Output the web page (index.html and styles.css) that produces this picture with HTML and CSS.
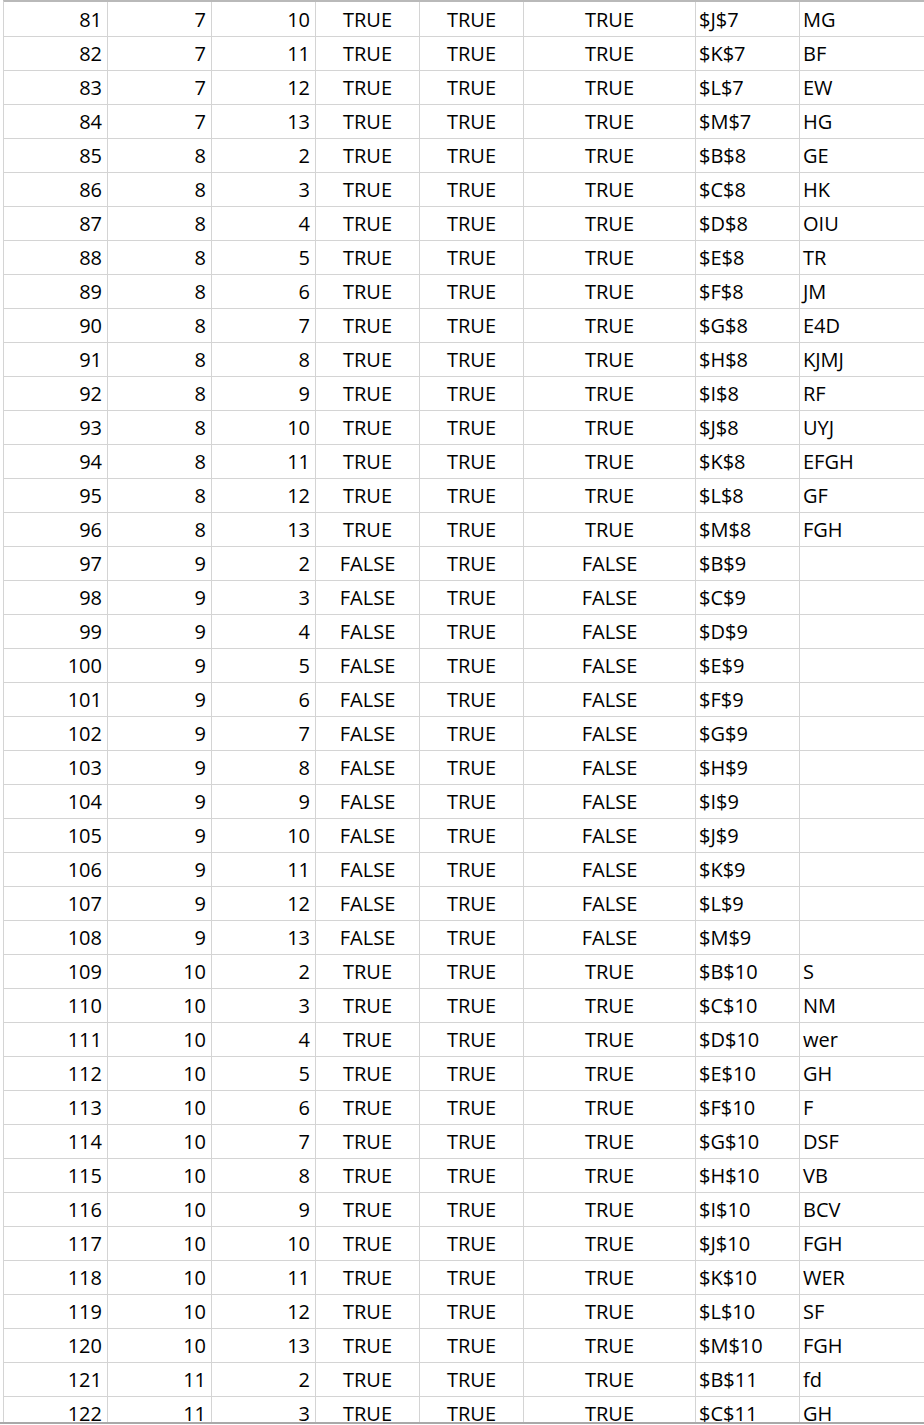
FILE: index.html
```html
<!DOCTYPE html>
<html>
<head>
<meta charset="utf-8">
<link rel="stylesheet" href="styles.css">
</head>
<body>
<div class="sheet">
<div class="row"><div class="c n">81</div><div class="c n">7</div><div class="c n">10</div><div class="c b">TRUE</div><div class="c b">TRUE</div><div class="c w b">TRUE</div><div class="c t">$J$7</div><div class="c t last">MG</div></div>
<div class="row"><div class="c n">82</div><div class="c n">7</div><div class="c n">11</div><div class="c b">TRUE</div><div class="c b">TRUE</div><div class="c w b">TRUE</div><div class="c t">$K$7</div><div class="c t last">BF</div></div>
<div class="row"><div class="c n">83</div><div class="c n">7</div><div class="c n">12</div><div class="c b">TRUE</div><div class="c b">TRUE</div><div class="c w b">TRUE</div><div class="c t">$L$7</div><div class="c t last">EW</div></div>
<div class="row"><div class="c n">84</div><div class="c n">7</div><div class="c n">13</div><div class="c b">TRUE</div><div class="c b">TRUE</div><div class="c w b">TRUE</div><div class="c t">$M$7</div><div class="c t last">HG</div></div>
<div class="row"><div class="c n">85</div><div class="c n">8</div><div class="c n">2</div><div class="c b">TRUE</div><div class="c b">TRUE</div><div class="c w b">TRUE</div><div class="c t">$B$8</div><div class="c t last">GE</div></div>
<div class="row"><div class="c n">86</div><div class="c n">8</div><div class="c n">3</div><div class="c b">TRUE</div><div class="c b">TRUE</div><div class="c w b">TRUE</div><div class="c t">$C$8</div><div class="c t last">HK</div></div>
<div class="row"><div class="c n">87</div><div class="c n">8</div><div class="c n">4</div><div class="c b">TRUE</div><div class="c b">TRUE</div><div class="c w b">TRUE</div><div class="c t">$D$8</div><div class="c t last">OIU</div></div>
<div class="row"><div class="c n">88</div><div class="c n">8</div><div class="c n">5</div><div class="c b">TRUE</div><div class="c b">TRUE</div><div class="c w b">TRUE</div><div class="c t">$E$8</div><div class="c t last">TR</div></div>
<div class="row"><div class="c n">89</div><div class="c n">8</div><div class="c n">6</div><div class="c b">TRUE</div><div class="c b">TRUE</div><div class="c w b">TRUE</div><div class="c t">$F$8</div><div class="c t last">JM</div></div>
<div class="row"><div class="c n">90</div><div class="c n">8</div><div class="c n">7</div><div class="c b">TRUE</div><div class="c b">TRUE</div><div class="c w b">TRUE</div><div class="c t">$G$8</div><div class="c t last">E4D</div></div>
<div class="row"><div class="c n">91</div><div class="c n">8</div><div class="c n">8</div><div class="c b">TRUE</div><div class="c b">TRUE</div><div class="c w b">TRUE</div><div class="c t">$H$8</div><div class="c t last">KJMJ</div></div>
<div class="row"><div class="c n">92</div><div class="c n">8</div><div class="c n">9</div><div class="c b">TRUE</div><div class="c b">TRUE</div><div class="c w b">TRUE</div><div class="c t">$I$8</div><div class="c t last">RF</div></div>
<div class="row"><div class="c n">93</div><div class="c n">8</div><div class="c n">10</div><div class="c b">TRUE</div><div class="c b">TRUE</div><div class="c w b">TRUE</div><div class="c t">$J$8</div><div class="c t last">UYJ</div></div>
<div class="row"><div class="c n">94</div><div class="c n">8</div><div class="c n">11</div><div class="c b">TRUE</div><div class="c b">TRUE</div><div class="c w b">TRUE</div><div class="c t">$K$8</div><div class="c t last">EFGH</div></div>
<div class="row"><div class="c n">95</div><div class="c n">8</div><div class="c n">12</div><div class="c b">TRUE</div><div class="c b">TRUE</div><div class="c w b">TRUE</div><div class="c t">$L$8</div><div class="c t last">GF</div></div>
<div class="row"><div class="c n">96</div><div class="c n">8</div><div class="c n">13</div><div class="c b">TRUE</div><div class="c b">TRUE</div><div class="c w b">TRUE</div><div class="c t">$M$8</div><div class="c t last">FGH</div></div>
<div class="row"><div class="c n">97</div><div class="c n">9</div><div class="c n">2</div><div class="c b">FALSE</div><div class="c b">TRUE</div><div class="c w b">FALSE</div><div class="c t">$B$9</div><div class="c t last"></div></div>
<div class="row"><div class="c n">98</div><div class="c n">9</div><div class="c n">3</div><div class="c b">FALSE</div><div class="c b">TRUE</div><div class="c w b">FALSE</div><div class="c t">$C$9</div><div class="c t last"></div></div>
<div class="row"><div class="c n">99</div><div class="c n">9</div><div class="c n">4</div><div class="c b">FALSE</div><div class="c b">TRUE</div><div class="c w b">FALSE</div><div class="c t">$D$9</div><div class="c t last"></div></div>
<div class="row"><div class="c n">100</div><div class="c n">9</div><div class="c n">5</div><div class="c b">FALSE</div><div class="c b">TRUE</div><div class="c w b">FALSE</div><div class="c t">$E$9</div><div class="c t last"></div></div>
<div class="row"><div class="c n">101</div><div class="c n">9</div><div class="c n">6</div><div class="c b">FALSE</div><div class="c b">TRUE</div><div class="c w b">FALSE</div><div class="c t">$F$9</div><div class="c t last"></div></div>
<div class="row"><div class="c n">102</div><div class="c n">9</div><div class="c n">7</div><div class="c b">FALSE</div><div class="c b">TRUE</div><div class="c w b">FALSE</div><div class="c t">$G$9</div><div class="c t last"></div></div>
<div class="row"><div class="c n">103</div><div class="c n">9</div><div class="c n">8</div><div class="c b">FALSE</div><div class="c b">TRUE</div><div class="c w b">FALSE</div><div class="c t">$H$9</div><div class="c t last"></div></div>
<div class="row"><div class="c n">104</div><div class="c n">9</div><div class="c n">9</div><div class="c b">FALSE</div><div class="c b">TRUE</div><div class="c w b">FALSE</div><div class="c t">$I$9</div><div class="c t last"></div></div>
<div class="row"><div class="c n">105</div><div class="c n">9</div><div class="c n">10</div><div class="c b">FALSE</div><div class="c b">TRUE</div><div class="c w b">FALSE</div><div class="c t">$J$9</div><div class="c t last"></div></div>
<div class="row"><div class="c n">106</div><div class="c n">9</div><div class="c n">11</div><div class="c b">FALSE</div><div class="c b">TRUE</div><div class="c w b">FALSE</div><div class="c t">$K$9</div><div class="c t last"></div></div>
<div class="row"><div class="c n">107</div><div class="c n">9</div><div class="c n">12</div><div class="c b">FALSE</div><div class="c b">TRUE</div><div class="c w b">FALSE</div><div class="c t">$L$9</div><div class="c t last"></div></div>
<div class="row"><div class="c n">108</div><div class="c n">9</div><div class="c n">13</div><div class="c b">FALSE</div><div class="c b">TRUE</div><div class="c w b">FALSE</div><div class="c t">$M$9</div><div class="c t last"></div></div>
<div class="row"><div class="c n">109</div><div class="c n">10</div><div class="c n">2</div><div class="c b">TRUE</div><div class="c b">TRUE</div><div class="c w b">TRUE</div><div class="c t">$B$10</div><div class="c t last">S</div></div>
<div class="row"><div class="c n">110</div><div class="c n">10</div><div class="c n">3</div><div class="c b">TRUE</div><div class="c b">TRUE</div><div class="c w b">TRUE</div><div class="c t">$C$10</div><div class="c t last">NM</div></div>
<div class="row"><div class="c n">111</div><div class="c n">10</div><div class="c n">4</div><div class="c b">TRUE</div><div class="c b">TRUE</div><div class="c w b">TRUE</div><div class="c t">$D$10</div><div class="c t last">wer</div></div>
<div class="row"><div class="c n">112</div><div class="c n">10</div><div class="c n">5</div><div class="c b">TRUE</div><div class="c b">TRUE</div><div class="c w b">TRUE</div><div class="c t">$E$10</div><div class="c t last">GH</div></div>
<div class="row"><div class="c n">113</div><div class="c n">10</div><div class="c n">6</div><div class="c b">TRUE</div><div class="c b">TRUE</div><div class="c w b">TRUE</div><div class="c t">$F$10</div><div class="c t last">F</div></div>
<div class="row"><div class="c n">114</div><div class="c n">10</div><div class="c n">7</div><div class="c b">TRUE</div><div class="c b">TRUE</div><div class="c w b">TRUE</div><div class="c t">$G$10</div><div class="c t last">DSF</div></div>
<div class="row"><div class="c n">115</div><div class="c n">10</div><div class="c n">8</div><div class="c b">TRUE</div><div class="c b">TRUE</div><div class="c w b">TRUE</div><div class="c t">$H$10</div><div class="c t last">VB</div></div>
<div class="row"><div class="c n">116</div><div class="c n">10</div><div class="c n">9</div><div class="c b">TRUE</div><div class="c b">TRUE</div><div class="c w b">TRUE</div><div class="c t">$I$10</div><div class="c t last">BCV</div></div>
<div class="row"><div class="c n">117</div><div class="c n">10</div><div class="c n">10</div><div class="c b">TRUE</div><div class="c b">TRUE</div><div class="c w b">TRUE</div><div class="c t">$J$10</div><div class="c t last">FGH</div></div>
<div class="row"><div class="c n">118</div><div class="c n">10</div><div class="c n">11</div><div class="c b">TRUE</div><div class="c b">TRUE</div><div class="c w b">TRUE</div><div class="c t">$K$10</div><div class="c t last">WER</div></div>
<div class="row"><div class="c n">119</div><div class="c n">10</div><div class="c n">12</div><div class="c b">TRUE</div><div class="c b">TRUE</div><div class="c w b">TRUE</div><div class="c t">$L$10</div><div class="c t last">SF</div></div>
<div class="row"><div class="c n">120</div><div class="c n">10</div><div class="c n">13</div><div class="c b">TRUE</div><div class="c b">TRUE</div><div class="c w b">TRUE</div><div class="c t">$M$10</div><div class="c t last">FGH</div></div>
<div class="row"><div class="c n">121</div><div class="c n">11</div><div class="c n">2</div><div class="c b">TRUE</div><div class="c b">TRUE</div><div class="c w b">TRUE</div><div class="c t">$B$11</div><div class="c t last">fd</div></div>
<div class="row"><div class="c n">122</div><div class="c n">11</div><div class="c n">3</div><div class="c b">TRUE</div><div class="c b">TRUE</div><div class="c w b">TRUE</div><div class="c t">$C$11</div><div class="c t last">GH</div></div>
</div>
<div class="hscroll"></div>
</body>
</html>
```

FILE: styles.css
```css
html, body {
  margin: 0;
  padding: 0;
  background: #ffffff;
}

body {
  font-family: "Open Sans", "Noto Sans", "Liberation Sans", sans-serif;
  font-size: 20px;
  color: #000000;
  width: 924px;
  overflow: hidden;
}

.sheet {
  height: 1420px;
  overflow: hidden;
  border-top: 2px solid #b9b9b9;
  margin-left: 3px;
  border-left: 1px solid #d4d4d4;
}

.row {
  display: flex;
  height: 34px;
  box-sizing: border-box;
  border-bottom: 1px solid #d4d4d4;
}

.row:first-child {
  height: 35px;
}

.c {
  box-sizing: border-box;
  width: 104px;
  flex: none;
  border-right: 1px solid #d4d4d4;
  display: flex;
  align-items: center;
  white-space: nowrap;
  overflow: hidden;
}

.c.w {
  width: 172px;
}

.c.last {
  width: 200px;
  border-right: none;
}

.n {
  justify-content: flex-end;
  padding-right: 5px;
}

.b {
  justify-content: center;
}

.t {
  justify-content: flex-start;
  padding-left: 3px;
}

.hscroll {
  height: 3px;
  border-top: 2px solid #a9a9a9;
  box-sizing: border-box;
}
```
